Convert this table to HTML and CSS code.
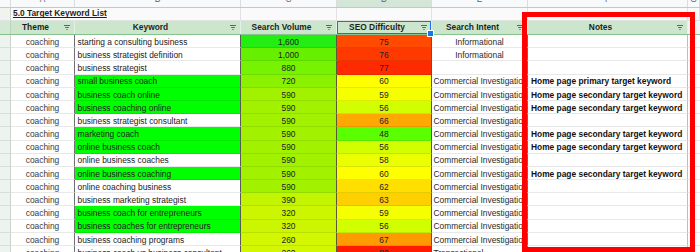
FILE: index.html
```html
<!DOCTYPE html>
<html>
<head>
<meta charset="utf-8">
<link rel="stylesheet" href="styles.css">
</head>
<body>
<div class="sheet">
  <div class="row letters">
    <div></div>
    <div><span>A</span></div>
    <div><span>B</span></div>
    <div><span>C</span></div>
    <div class="sel"><span>D</span></div>
    <div><span>E</span></div>
    <div><span>F</span></div>
    <div><span>G</span></div>
  </div>
  <div class="row title">
    <div class="rh"></div>
    <div class="ttl"><span>5.0 Target Keyword List</span></div>
    <div></div>
    <div></div>
    <div></div>
    <div></div>
    <div></div>
  </div>
  <div class="row hdr">
    <div class="rh"></div>
    <div><span class="lbl">Theme</span><svg viewBox="0 0 6 5" width="6" height="5"><path d="M0 0.5H6M1.2 2.5H4.8M2.4 4.5H3.6" stroke="#5f6368" stroke-width="1"/></svg></div>
    <div><span class="lbl">Keyword</span><svg viewBox="0 0 6 5" width="6" height="5"><path d="M0 0.5H6M1.2 2.5H4.8M2.4 4.5H3.6" stroke="#5f6368" stroke-width="1"/></svg></div>
    <div><span class="lbl">Search Volume</span><svg viewBox="0 0 6 5" width="6" height="5"><path d="M0 0.5H6M1.2 2.5H4.8M2.4 4.5H3.6" stroke="#5f6368" stroke-width="1"/></svg></div>
    <div class="sel"><span class="lbl">SEO Difficulty</span><svg viewBox="0 0 6 5" width="6" height="5"><path d="M0 0.5H6M1.2 2.5H4.8M2.4 4.5H3.6" stroke="#5f6368" stroke-width="1"/></svg></div>
    <div><span class="lbl">Search Intent</span><svg viewBox="0 0 6 5" width="6" height="5"><path d="M0 0.5H6M1.2 2.5H4.8M2.4 4.5H3.6" stroke="#5f6368" stroke-width="1"/></svg></div>
    <div><span class="lbl">Notes</span><svg viewBox="0 0 6 5" width="6" height="5"><path d="M0 0.5H6M1.2 2.5H4.8M2.4 4.5H3.6" stroke="#5f6368" stroke-width="1"/></svg></div>
    <div class="gap"></div>
  </div>

  <div class="row d"><div class="rh"></div><div class="th">coaching</div><div class="kw">starting a consulting business</div><div class="num" style="background:#22ee11">1,600</div><div class="num" style="background:#ff4a00">75</div><div class="in c">Informational</div><div class="nt"></div><div class="gap"></div></div>
  <div class="row d"><div class="rh"></div><div class="th">coaching</div><div class="kw">business strategist definition</div><div class="num" style="background:#66f000">1,000</div><div class="num" style="background:#ff3a00">76</div><div class="in c">Informational</div><div class="nt"></div><div class="gap"></div></div>
  <div class="row d"><div class="rh"></div><div class="th">coaching</div><div class="kw">business strategist</div><div class="num" style="background:#77f200">880</div><div class="num" style="background:#ff2a00">77</div><div class="in"></div><div class="nt"></div><div class="gap"></div></div>
  <div class="row d"><div class="rh"></div><div class="th">coaching</div><div class="kw hl">small business coach</div><div class="num" style="background:#8af200">720</div><div class="num" style="background:#ffff00">60</div><div class="in">Commercial Investigation</div><div class="nt">Home page primary target keyword</div><div class="gap"></div></div>
  <div class="row d"><div class="rh"></div><div class="th">coaching</div><div class="kw hl">business coach online</div><div class="num" style="background:#a2f200">590</div><div class="num" style="background:#f6ff00">59</div><div class="in">Commercial Investigation</div><div class="nt">Home page secondary target keyword</div><div class="gap"></div></div>
  <div class="row d"><div class="rh"></div><div class="th">coaching</div><div class="kw hl">business coaching online</div><div class="num" style="background:#a2f200">590</div><div class="num" style="background:#d2ff00">56</div><div class="in">Commercial Investigation</div><div class="nt">Home page secondary target keyword</div><div class="gap"></div></div>
  <div class="row d"><div class="rh"></div><div class="th">coaching</div><div class="kw">business strategist consultant</div><div class="num" style="background:#a2f200">590</div><div class="num" style="background:#ffa800">66</div><div class="in">Commercial Investigation</div><div class="nt"></div><div class="gap"></div></div>
  <div class="row d"><div class="rh"></div><div class="th">coaching</div><div class="kw hl">marketing coach</div><div class="num" style="background:#a2f200">590</div><div class="num" style="background:#5cff00">48</div><div class="in">Commercial Investigation</div><div class="nt">Home page secondary target keyword</div><div class="gap"></div></div>
  <div class="row d"><div class="rh"></div><div class="th">coaching</div><div class="kw hl">online business coach</div><div class="num" style="background:#a2f200">590</div><div class="num" style="background:#d2ff00">56</div><div class="in">Commercial Investigation</div><div class="nt">Home page secondary target keyword</div><div class="gap"></div></div>
  <div class="row d"><div class="rh"></div><div class="th">coaching</div><div class="kw">online business coaches</div><div class="num" style="background:#a2f200">590</div><div class="num" style="background:#ecff00">58</div><div class="in">Commercial Investigation</div><div class="nt"></div><div class="gap"></div></div>
  <div class="row d"><div class="rh"></div><div class="th">coaching</div><div class="kw hl">online business coaching</div><div class="num" style="background:#a2f200">590</div><div class="num" style="background:#ffff00">60</div><div class="in">Commercial Investigation</div><div class="nt">Home page secondary target keyword</div><div class="gap"></div></div>
  <div class="row d"><div class="rh"></div><div class="th">coaching</div><div class="kw">online coaching business</div><div class="num" style="background:#a2f200">590</div><div class="num" style="background:#ffdf00">62</div><div class="in">Commercial Investigation</div><div class="nt"></div><div class="gap"></div></div>
  <div class="row d"><div class="rh"></div><div class="th">coaching</div><div class="kw">business marketing strategist</div><div class="num" style="background:#c4f500">390</div><div class="num" style="background:#ffd000">63</div><div class="in">Commercial Investigation</div><div class="nt"></div><div class="gap"></div></div>
  <div class="row d"><div class="rh"></div><div class="th">coaching</div><div class="kw hl">business coach for entrepreneurs</div><div class="num" style="background:#cbf600">320</div><div class="num" style="background:#f6ff00">59</div><div class="in">Commercial Investigation</div><div class="nt"></div><div class="gap"></div></div>
  <div class="row d"><div class="rh"></div><div class="th">coaching</div><div class="kw hl">business coaches for entrepreneurs</div><div class="num" style="background:#cbf600">320</div><div class="num" style="background:#d2ff00">56</div><div class="in">Commercial Investigation</div><div class="nt"></div><div class="gap"></div></div>
  <div class="row d"><div class="rh"></div><div class="th">coaching</div><div class="kw">business coaching programs</div><div class="num" style="background:#d2f700">260</div><div class="num" style="background:#ff9a00">67</div><div class="in">Commercial Investigation</div><div class="nt"></div><div class="gap"></div></div>
  <div class="row d"><div class="rh"></div><div class="th">coaching</div><div class="kw">business coach vs business consultant</div><div class="num" style="background:#d2f700">260</div><div class="num" style="background:#ff1a00">80</div><div class="in">Transactional</div><div class="nt"></div><div class="gap"></div></div>

  <div class="callout"></div>
</div>
</body>
</html>
```

FILE: styles.css
```css
* { box-sizing: border-box; }
html, body { margin: 0; padding: 0; background: #fff; overflow: hidden; }
body {
  font-family: "Liberation Sans", Arial, sans-serif;
  font-size: 8.4px;
  color: #222;
}
.sheet {
  position: relative;
  width: 700px;
  height: 252px;
  overflow: hidden;
}
.row {
  display: grid;
  grid-template-columns: 11px 64px 166px 96px 95px 96px 160px 12px;
}

/* column letters strip */
.letters {
  height: 8px;
  background: #f8f9fa;
  border-bottom: 1px solid #c7c7c7;
}
.letters > div {
  display: flex;
  justify-content: center;
  align-items: flex-end;
  overflow: hidden;
  border-right: 1px solid #dadce0;
  color: #5f6368;
}
.letters span { line-height: 10px; margin-bottom: 3px; }
.letters .sel { background: #d3e6d7; }

/* title row */
.title { height: 13px; background: #fafafa; }
.title > div {
  border-right: 1px solid #e2e2e2;
  border-bottom: 1px solid #e2e2e2;
  display: flex;
  align-items: center;
  white-space: nowrap;
  overflow: visible;
}
.title .rh { background: #f1f3f1; border-right-color: #c9d1ca; }
.title .ttl { grid-column: span 2; padding-left: 2px; }
.ttl span {
  font-weight: bold;
  text-decoration: underline;
  color: #1f1f1f;
  line-height: 9.4px;
}

/* table header */
.hdr {
  height: 14px;
  background: #cbe6cd;
  border-bottom: 1px solid #86c28c;
}
.hdr > div {
  display: flex;
  align-items: center;
  padding-right: 4px;
  border-right: 1px solid #e4f1e5;
  font-weight: bold;
  color: #1f1f1f;
}
.hdr .lbl {
  flex: 1;
  text-align: center;
  margin-right: 4px;
  white-space: nowrap;
  line-height: 9.4px;
}
.hdr svg { flex: none; display: block; }
.hdr .rh { background: #d3e8d5; border-right-color: #b9d6bc; }
.hdr .gap { background: #f3f4f3; border-right: none; }
.hdr .sel {
  position: relative;
  box-shadow: inset 0 0 0 1px #1a73e8;
}
.hdr .sel::after {
  content: "";
  position: absolute;
  right: -3px;
  bottom: -3px;
  width: 5px;
  height: 5px;
  background: #1a73e8;
  border: 1px solid #fff;
  z-index: 2;
}

/* data rows */
.d { height: 13.2px; }
.d > div {
  display: flex;
  align-items: flex-end;
  overflow: hidden;
  white-space: nowrap;
  line-height: 9.4px;
  border-bottom: 1px solid rgba(0, 0, 0, 0.09);
  background: #fff;
}
.d .rh { background: #edf3ee; border-right: 1px solid #c9d3cb; }
.d .th { justify-content: center; color: #3a3a3a; border-right: 1px solid #707070; }
.d .kw { padding-left: 2.5px; border-right: 1px solid #5a5a5a; }
.d .kw.hl { background: #00ff00; }
.d .num { justify-content: center; border-right: 1px solid #5a5a3a; }
.d .in { padding-left: 1.5px; border-right: 1px solid #6a6a6a; color: #2a2a2a; }
.d .in.c { justify-content: center; padding-left: 0; }
.d .nt { padding-left: 3px; font-weight: bold; color: #111; border-right: 1px solid #9fd0a6; }
.d .gap { background: #fff; }

/* red highlight frame drawn over the Notes column */
.callout {
  position: absolute;
  left: 522px;
  top: 12px;
  width: 173px;
  height: 240px;
  border: 5px solid #ff0000;
  z-index: 3;
}
```
